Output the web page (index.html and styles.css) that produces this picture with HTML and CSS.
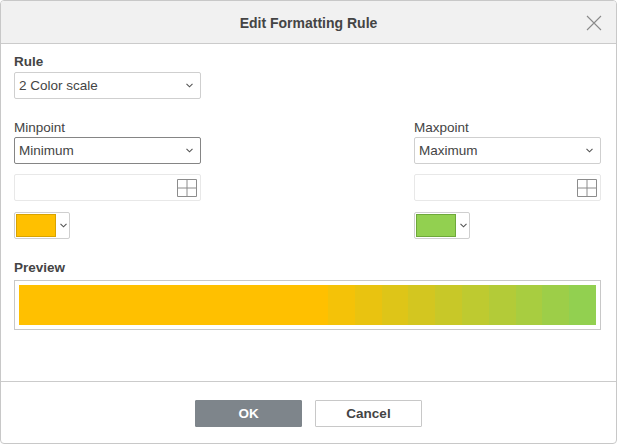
FILE: index.html
```html
<!DOCTYPE html>
<html>
<head>
<meta charset="utf-8">
<link rel="stylesheet" href="styles.css">
</head>
<body>
<div class="dialog">
  <div class="header">
    <div class="title">Edit Formatting Rule</div>
    <svg class="close" width="16" height="16" viewBox="0 0 16 16"><path d="M1 1 L15 15 M15 1 L1 15" stroke="#8a8a8a" stroke-width="1.1" fill="none"/></svg>
  </div>
  <div class="body">
    <div class="label bold">Rule</div>
    <div class="select light">
      <span>2 Color scale</span>
      <svg class="chev" width="7" height="5" viewBox="0 0 7 5"><path d="M0.5 0.8 L3.5 3.8 L6.5 0.8" stroke="#555" stroke-width="1.1" fill="none"/></svg>
    </div>
    <div class="points">
      <div class="col">
        <div class="label">Minpoint</div>
        <div class="select focus">
          <span>Minimum</span>
          <svg class="chev" width="7" height="5" viewBox="0 0 7 5"><path d="M0.5 0.8 L3.5 3.8 L6.5 0.8" stroke="#555" stroke-width="1.1" fill="none"/></svg>
        </div>
        <div class="input">
          <svg class="grid" width="20" height="18" viewBox="0 0 20 18"><path d="M0.5 0.5 H19.5 V17.5 H0.5 Z M10 0.5 V17.5 M0.5 9 H19.5" stroke="#8c8c8c" stroke-width="1" fill="none"/></svg>
        </div>
        <div class="colorbtn">
          <div class="swatch orange"></div>
          <svg class="chev small" width="7" height="5" viewBox="0 0 7 5"><path d="M0.5 0.8 L3.5 3.8 L6.5 0.8" stroke="#555" stroke-width="1.1" fill="none"/></svg>
        </div>
      </div>
      <div class="col">
        <div class="label">Maxpoint</div>
        <div class="select light">
          <span>Maximum</span>
          <svg class="chev" width="7" height="5" viewBox="0 0 7 5"><path d="M0.5 0.8 L3.5 3.8 L6.5 0.8" stroke="#555" stroke-width="1.1" fill="none"/></svg>
        </div>
        <div class="input">
          <svg class="grid" width="20" height="18" viewBox="0 0 20 18"><path d="M0.5 0.5 H19.5 V17.5 H0.5 Z M10 0.5 V17.5 M0.5 9 H19.5" stroke="#8c8c8c" stroke-width="1" fill="none"/></svg>
        </div>
        <div class="colorbtn">
          <div class="swatch green"></div>
          <svg class="chev small" width="7" height="5" viewBox="0 0 7 5"><path d="M0.5 0.8 L3.5 3.8 L6.5 0.8" stroke="#555" stroke-width="1.1" fill="none"/></svg>
        </div>
      </div>
    </div>
    <div class="label bold preview-label">Preview</div>
    <div class="preview">
      <div class="bar"></div>
    </div>
  </div>
  <div class="footer">
    <button class="btn ok">OK</button>
    <button class="btn cancel">Cancel</button>
  </div>
</div>
</body>
</html>
```

FILE: styles.css
```css
* { box-sizing: border-box; }
html, body { margin: 0; padding: 0; background: #fff; }
body {
  font-family: "Liberation Sans", Arial, sans-serif;
  color: #444;
}
.dialog {
  width: 617px;
  height: 444px;
  border: 1px solid #c8c8c8;
  border-radius: 4px;
  display: flex;
  flex-direction: column;
  overflow: hidden;
  background: #fff;
}
.header {
  height: 43px;
  flex: none;
  background: #f1f1f1;
  border-bottom: 1px solid #cbcbcb;
  display: flex;
  align-items: center;
  justify-content: center;
  position: relative;
}
.title {
  font-size: 14px;
  font-weight: bold;
  color: #444;
  margin-top: 1px;
}
.close {
  position: absolute;
  right: 14px;
  top: 14px;
}
.body {
  flex: 1;
  padding: 10px 15px 0 13px;
  display: flex;
  flex-direction: column;
}
.label {
  font-size: 13.5px;
  line-height: 16px;
  height: 16px;
  margin-bottom: 2px;
  color: #444;
}
.bold { font-weight: bold; }
.select {
  width: 187px;
  height: 27px;
  border: 1px solid #cfcfcf;
  border-radius: 2px;
  display: flex;
  align-items: center;
  justify-content: space-between;
  padding: 0 7px 0 4px;
  font-size: 13.5px;
  color: #444;
}
.select.focus { border-color: #858585; }
.chev { flex: none; }
.points {
  display: flex;
  justify-content: space-between;
  margin-top: 21px;
}
.col {
  width: 187px;
  display: flex;
  flex-direction: column;
}
.col .label { margin-bottom: 1px; }
.input {
  margin-top: 10px;
  height: 27px;
  border: 1px solid #e8e8e8;
  border-radius: 2px;
  display: flex;
  align-items: center;
  justify-content: flex-end;
  padding-right: 3px;
}
.colorbtn {
  margin-top: 11px;
  width: 56px;
  height: 27px;
  border: 1px solid #cfcfcf;
  border-radius: 2px;
  display: flex;
  align-items: center;
  padding: 0 4px 0 1px;
  gap: 4px;
}
.swatch {
  width: 40px;
  height: 23px;
  flex: none;
}
.swatch.orange { background: #ffc000; border: 1px solid #d9a300; }
.swatch.green { background: #92d050; border: 1px solid #6ea83a; }
.preview-label { margin-top: 21px; }
.preview {
  margin-top: 2px;
  height: 50px;
  border: 1px solid #c8c8c8;
  padding: 4px;
}
.bar {
  height: 40px;
  background: linear-gradient(90deg,
    #ffc000 0, #ffc000 309px,
    #f4c208 309px, #f4c208 336px,
    #e9c310 336px, #e9c310 363px,
    #dec518 363px, #dec518 389px,
    #d3c620 389px, #d3c620 416px,
    #c8c828 416px, #c8c828 443px,
    #beca30 443px, #beca30 470px,
    #b3cb38 470px, #b3cb38 497px,
    #a8cd40 497px, #a8cd40 523px,
    #9dce48 523px, #9dce48 550px,
    #92d050 550px, #92d050 100%);
}
.footer {
  flex: none;
  height: 62px;
  border-top: 1px solid #cbcbcb;
  display: flex;
  justify-content: center;
  align-items: flex-start;
  gap: 13px;
  padding-top: 18px;
}
.btn {
  width: 107px;
  height: 27px;
  font-family: "Liberation Sans", Arial, sans-serif;
  font-size: 13.5px;
  font-weight: bold;
  border-radius: 1px;
  padding: 0;
  margin: 0;
}
.btn.ok {
  background: #7e858b;
  border: 1px solid #7e858b;
  color: #fff;
}
.btn.cancel {
  background: #fff;
  border: 1px solid #c8c8c8;
  color: #444;
}
```
